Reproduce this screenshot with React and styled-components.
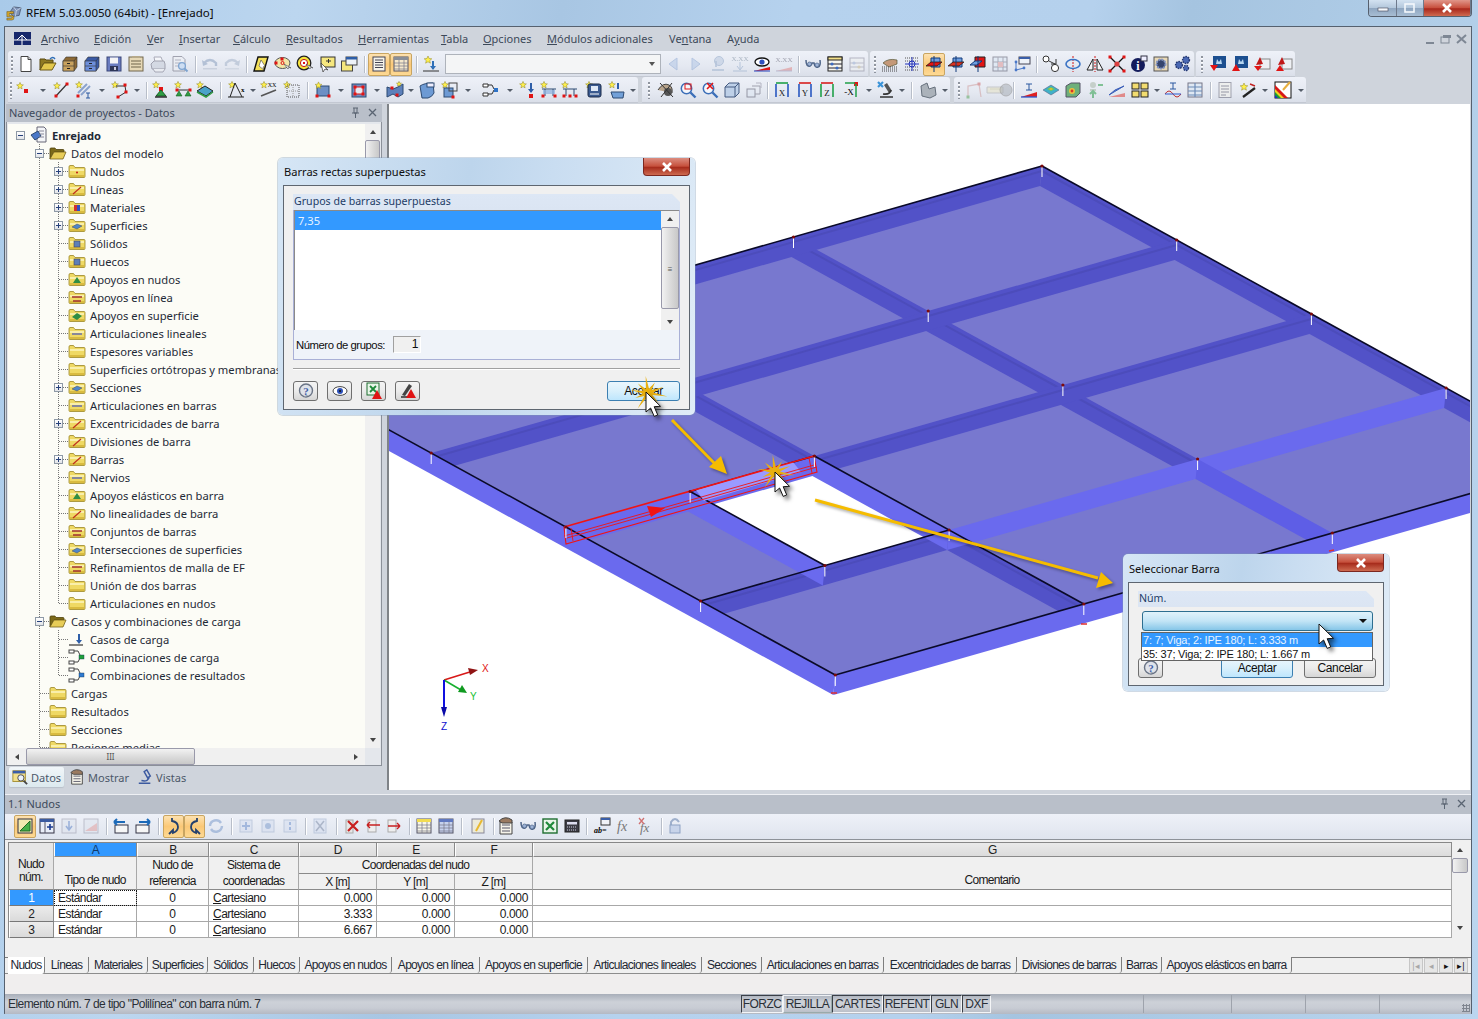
import React from "react";
import styled, { createGlobalStyle, css } from "styled-components";

const UI = '"Noto Sans", "Open Sans", sans-serif';
const TABLE = '"Liberation Sans", Arial, sans-serif';

const Global = createGlobalStyle`
  html, body { margin: 0; padding: 0; background: #b9d2ea; }
  * { box-sizing: border-box; }
`;

/* ---------- icon drawings, all on an 18x18 grid ---------- */
const Star = ({ x = 5, y = 5, r = 3.6 }) => {
  const pts = [];
  for (let k = 0; k < 10; k++) {
    const a = (Math.PI / 5) * k - Math.PI / 2;
    const q = k % 2 ? r * 0.45 : r;
    pts.push(`${(x + q * Math.cos(a)).toFixed(1)},${(y + q * Math.sin(a)).toFixed(1)}`);
  }
  return <polygon points={pts.join(" ")} fill="#fff04a" stroke="#8f8420" strokeWidth=".5" />;
};
const Dot = ({ x, y, c = "#e01414", s = 3 }) => <rect x={x - s / 2} y={y - s / 2} width={s} height={s} fill={c} />;
const Cabinet = ({ c, d }) => (
  <>
    <path d="M2 6l3-4h11v10l-3 4H2z" fill={d} stroke="#333" strokeWidth=".6" />
    <rect x="2" y="6" width="11" height="10" fill={c} stroke="#333" strokeWidth=".6" />
    <path d="M2 11h11M13 6l3-4" stroke="#333" strokeWidth=".6" />
    <rect x="6" y="8" width="3" height="1" fill="#222" />
    <rect x="6" y="13" width="3" height="1" fill="#222" />
  </>
);
const Magnifier = ({ c = "#3c6fb8" }) => (
  <>
    <circle cx="7.5" cy="7.5" r="5.2" fill="#f4f6fb" stroke={c} strokeWidth="1.5" />
    <path d="M11.5 11.5l5 5" stroke={c} strokeWidth="2.4" />
  </>
);
const Plane = ({ c = "#e01414" }) => (
  <>
    <path d="M6 3h9v9H6z" fill="#6f9ee0" stroke="#123a7a" />
    <path d="M1 11l5-4h11l-5 4z" fill={c} stroke="#111" strokeWidth=".7" />
    <path d="M9 1v16" stroke="#123a7a" strokeWidth="1" />
  </>
);
const AxisBox = ({ l, a, b }) => (
  <>
    <path d="M3 2h12" stroke={a} strokeWidth="1.6" />
    <path d="M3 3v13M15 3v13" stroke={b} strokeWidth="1.6" />
    <text x="9" y="15" fontSize="9" fontFamily="Liberation Serif" textAnchor="middle" fill="#222">{l}</text>
  </>
);
const Quad = ({ c = "#6d8fc4", r = true }) => (
  <>
    <rect x="3" y="5" width="12" height="10" fill={c} stroke="#2d4a72" />
    {r && <><Dot x={3} y={15} /><Dot x={15} y={15} /></>}
    <Star x={4.5} y={4.5} />
  </>
);
const Sheet = () => (
  <>
    <rect x="3" y="1.5" width="12" height="15" fill="#f2f1ea" stroke="#667" />
    <path d="M5 5h8M5 8h8M5 11h8M5 14h5" stroke="#556" />
  </>
);
const Grid3 = ({ c = "#dfe6f4", h = "#f2c33c" }) => (
  <>
    <rect x="2" y="2" width="14" height="14" fill={c} stroke="#556" />
    <rect x="2" y="2" width="14" height="3" fill={h} />
    <path d="M2 8h14M2 11h14M2 14h14M7 5v11M12 5v11" stroke="#778" strokeWidth=".7" />
  </>
);
const Small = ({ c }) => <rect x="6" y="7" width="6" height="6" fill={c} stroke="#445" strokeWidth=".6" />;

const ICONS = {
  page: <><path d="M4 1.5h7l3 3v12H4z" fill="#fff" stroke="#444" /><path d="M11 1.5v3h3" fill="#ccc" stroke="#444" /></>,
  folder: <><path d="M1 15V4h5l1 1h7v3H5z" fill="#8f7a22" stroke="#5a4a12" /><path d="M1 15l4-7h12l-4 7z" fill="#e3c84c" stroke="#6d5a18" /><path d="M11 4q3-3 5 0" stroke="#2e6fb8" fill="none" strokeWidth="1.4" /></>,
  cabY: <Cabinet c="#c9a25e" d="#8d6a36" />,
  cabB: <Cabinet c="#6d8fdc" d="#3a5aa6" />,
  save: <><rect x="2" y="2" width="14" height="14" fill="#6a7cc0" stroke="#3a4678" /><rect x="5" y="2.5" width="8" height="6" fill="#f4f4f6" /><rect x="5" y="11" width="8" height="5" fill="#2e3658" /><rect x="9" y="12" width="2" height="3" fill="#ccd" /></>,
  clip: <><rect x="2" y="2" width="14" height="14" fill="#e6d8b6" stroke="#70664c" /><path d="M4 6h10M4 9h10M4 12h10" stroke="#6f654a" /><rect x="5" y="1" width="8" height="2" fill="#b6a98a" /></>,
  print: <><path d="M5 2h7l2 5H6z" fill="#fff" stroke="#778" /><path d="M2 9l3-3h10l1 3v5H3z" fill="#c6ccd8" stroke="#667" /><path d="M4 14l2 3h8l2-3" fill="#f1f2f5" stroke="#778" /></>,
  prev: <><path d="M2 1.5h9l3 3V16H2z" fill="#eef0f4" stroke="#667" /><path d="M4 5h6M4 8h6M4 11h5" stroke="#889" /><circle cx="11" cy="11" r="3.4" fill="#bcd6f4" stroke="#2e6fb8" strokeWidth="1.3" /><path d="M13.5 13.5l3 3" stroke="#2e6fb8" strokeWidth="2" /></>,
  undo: <><path d="M3 8q6-6 12 0v3" fill="none" stroke="#8ba0bf" strokeWidth="2.4" /><path d="M1 5l1 6 5-2z" fill="#8ba0bf" /><rect x="2" y="13" width="14" height="1.5" fill="#b5bfcf" /></>,
  redo: <><path d="M15 8q-6-6-12 0v3" fill="none" stroke="#a5b4ca" strokeWidth="2.4" /><path d="M17 5l-1 6-5-2z" fill="#a5b4ca" /><rect x="2" y="13" width="14" height="1.5" fill="#c3ccd9" /></>,
  para: <><path d="M6 2h10l-4 14H2z" fill="#f3e05a" stroke="#111" strokeWidth="1.4" /><path d="M9 5l4 6-2 1 1 3-5-4z" fill="#fff" stroke="#444" strokeWidth=".6" /></>,
  cloud: <><ellipse cx="8.5" cy="8" rx="7.5" ry="5.5" fill="#f2e6a6" stroke="#555" /><Dot x={8} y={4} /><Dot x={2} y={8} /><circle cx="8.5" cy="8" r="1.5" fill="none" stroke="#e01414" /><path d="M10 9l4 5 1-2 2 1z" fill="#fff" stroke="#444" strokeWidth=".6" /></>,
  target: <><circle cx="8" cy="8" r="6.8" fill="#f8e43c" stroke="#222" strokeWidth="1.3" /><circle cx="8" cy="8" r="3.6" fill="#fff" stroke="#c01a1a" /><Dot x={8} y={8} s={2} /><path d="M10 9l4 5 1-2 2 1z" fill="#fff" stroke="#444" strokeWidth=".6" /></>,
  note: <><rect x="3" y="2" width="14" height="10" fill="#f6e77e" stroke="#333" /><path d="M8 6h5M10.5 4v4" stroke="#333" /><path d="M3 8l2 9 2-3 3 1z" fill="#fff" stroke="#333" strokeWidth=".7" /></>,
  win: <><rect x="1.5" y="6" width="11" height="10" fill="#f6e77e" stroke="#444" /><rect x="6" y="2" width="11" height="8" fill="#eef2f8" stroke="#444" /><rect x="6" y="2" width="11" height="2.5" fill="#2e5ea8" /></>,
  list: <><rect x="3" y="2" width="12" height="14" fill="#f5f3ea" stroke="#445" /><path d="M5 5h8M5 7.5h8M5 10h8M5 12.5h8" stroke="#445" /></>,
  table: <Grid3 c="#f5e8cc" h="#8a8f98" />,
  lcase: <><Star x={6} y={5} r={4} /><path d="M11 6v8" stroke="#2e6fb8" strokeWidth="2" /><path d="M8 11l3 4 3-4" fill="#2e6fb8" /><path d="M1 16h16" stroke="#333" /></>,
  left: <path d="M12 3v12L4 9z" fill="#b3c7e6" stroke="#8ca7d2" />,
  right: <path d="M5 3v12l8-6z" fill="#b3c7e6" stroke="#8ca7d2" />,
  eyeN: <><circle cx="10" cy="6" r="4.5" fill="#bac9e0" stroke="#8ea6c6" /><path d="M7 6v6M3 15h12" stroke="#8ea6c6" strokeWidth="1.6" /></>,
  xxD: <><text x="9" y="6" fontSize="7" textAnchor="middle" fontFamily="Liberation Serif" fill="#789">X.XX</text><path d="M9 7v7M6 11l3 4 3-4M2 16h14" stroke="#8ea6c6" fill="none" /></>,
  eye: <><ellipse cx="9" cy="7" rx="7" ry="4" fill="#fff" stroke="#111" strokeWidth="1.3" /><circle cx="9" cy="7" r="2.6" fill="#2e50c0" /><path d="M1 16l16-4v3z" fill="#e01414" /><path d="M1 16h16" stroke="#2245c0" /></>,
  xxL: <><text x="9" y="7" fontSize="7" textAnchor="middle" fontFamily="Liberation Serif" fill="#667">X.XX</text><path d="M1 16l16-4v4z" fill="#e08a8a" /><path d="M1 16h16" stroke="#99b" /></>,
  glasses: <><path d="M2 5q0 7 4 6 2-1 2-3h2q1 5 4 4 3-1 2-7" fill="none" stroke="#4e6488" strokeWidth="1.5" /><circle cx="5.5" cy="9" r="2" fill="#9db3d8" stroke="#4e6488" strokeWidth=".7" /><circle cx="13" cy="10" r="2" fill="#9db3d8" stroke="#4e6488" strokeWidth=".7" /></>,
  abacus: <><rect x="2" y="2" width="14" height="14" fill="#f5f5ee" stroke="#222" /><rect x="2" y="2" width="14" height="3" fill="#f3e08a" stroke="#222" /><path d="M2 9h14M2 13h14" stroke="#223" /><circle cx="6" cy="9" r="1.6" fill="#3a6ac0" /><circle cx="11" cy="13" r="1.6" fill="#3a6ac0" /></>,
  abacusG: <><rect x="2" y="3" width="14" height="13" fill="#eef0f0" stroke="#889" /><path d="M2 8h14M2 12h14" stroke="#99a" /><circle cx="6" cy="8" r="1.6" fill="#9aaed0" /><circle cx="11" cy="12" r="1.6" fill="#c8b98c" /></>,
  hand: <><path d="M2 8q5-5 14-3v4l-8 3z" fill="#c49878" stroke="#553" strokeWidth=".7" /><path d="M1 12h16M1 14h16M1 16h16" stroke="#444" strokeDasharray="1 1" /></>,
  dots: <><path d="M2 3h14M2 6h14M2 12h14M2 15h14" stroke="#555" strokeDasharray="1 1" /><circle cx="9" cy="9" r="3" fill="none" stroke="#2233bb" /><path d="M9 2v14M2 9h14" stroke="#2233bb" /></>,
  planeA: <Plane />,
  planeB: <Plane c="#d83020" />,
  planeC: <><path d="M6 2h10v10H6z" fill="#e01414" stroke="#222" /><path d="M1 10l5-4h7l-5 4z" fill="#6f9ee0" stroke="#123a7a" /><path d="M9 1v16" stroke="#123a7a" /></>,
  planeD: <><path d="M5 3h10v10H5z" fill="#abc2e6" stroke="#7b98c8" /><path d="M3 14l4-4h9l-4 4z" fill="#e6b9a8" /></>,
  gridC: <><rect x="2" y="2" width="14" height="14" fill="#dce8f5" stroke="#556" /><path d="M7 2v14M12 2v14M2 7h14M2 12h14" stroke="#778" /><rect x="7" y="7" width="5" height="5" fill="#e09a9a" /></>,
  winN: <><rect x="6" y="2" width="11" height="7" fill="#eef2f8" stroke="#445" /><rect x="6" y="2" width="11" height="2" fill="#3a5ea8" /><circle cx="3" cy="7" r="1.4" fill="#4a78c8" /><circle cx="3" cy="15" r="1.4" fill="#4a78c8" /><circle cx="11" cy="13" r="1.4" fill="#4a78c8" /><path d="M3 7v8l8-2" fill="none" stroke="#4a78c8" /></>,
  circles: <><circle cx="4" cy="4" r="3" fill="#fff" stroke="#333" /><circle cx="13" cy="13" r="3.6" fill="#fff" stroke="#333" /><path d="M7 6l6 3" stroke="#333" /><path d="M14 4v5h-5" fill="none" stroke="#333" /></>,
  rotate: <><path d="M9 1v16" stroke="#d01818" strokeDasharray="2 1" /><ellipse cx="9" cy="9" rx="7" ry="4.5" fill="none" stroke="#3b73c4" strokeWidth="1.6" /></>,
  mirror: <><path d="M1 15l6-11v11zM17 15l-6-11v11z" fill="#f4f5f8" stroke="#222" /><path d="M9 1v16" stroke="#d01818" strokeDasharray="2 1" /></>,
  xmark: <><path d="M2 2l14 14M16 2L2 16" stroke="#111" strokeWidth="1.3" /><circle cx="9" cy="9" r="2.6" fill="#d84040" /><Dot x={2} y={2} /><Dot x={16} y={2} /><Dot x={2} y={16} /><Dot x={16} y={16} /></>,
  info: <><circle cx="8" cy="10" r="7" fill="#141c5c" /><text x="8" y="14.5" textAnchor="middle" fontSize="12" fontWeight="700" fontFamily="Liberation Serif" fill="#fff">i</text><rect x="11" y="1" width="6" height="5" fill="#eef" stroke="#334" /></>,
  gearBox: <><rect x="2" y="2" width="14" height="14" fill="#e8d8b6" stroke="#555" /><circle cx="9" cy="9" r="4.5" fill="#36456e" stroke="#8496c4" strokeDasharray="2 1" strokeWidth="2" /></>,
  gears: <><circle cx="5" cy="10" r="3.4" fill="#4a68b4" stroke="#23366e" strokeDasharray="1.5 1" strokeWidth="1.5" /><circle cx="12" cy="5" r="3.4" fill="#4a68b4" stroke="#23366e" strokeDasharray="1.5 1" strokeWidth="1.5" /><circle cx="12" cy="13" r="2.6" fill="#4a68b4" stroke="#23366e" strokeDasharray="1.5 1" strokeWidth="1.2" /></>,
  imp1: <><rect x="4" y="1" width="13" height="12" fill="#1c4f90" /><path d="M8 4l2 3 2-3 1 5H7z" fill="#b6d6f0" /><path d="M1 10h8l-4 6z" fill="#e01414" /></>,
  imp2: <><rect x="4" y="1" width="13" height="12" fill="#1c4f90" /><path d="M8 4l2 3 2-3 1 5H7z" fill="#b6d6f0" /><path d="M5 9l4 7H1z" fill="#e01414" /></>,
  imp3: <><rect x="7" y="4" width="10" height="10" fill="#eef0f4" stroke="#888" /><path d="M7 2l-4 8 7-1z" fill="#c01818" /><path d="M1 11h8l-4 5z" fill="#e01414" /></>,
  imp4: <><rect x="7" y="4" width="10" height="10" fill="#eef0f4" stroke="#888" /><path d="M7 2l-4 8 7-1z" fill="#c01818" /><path d="M5 10l4 6H1z" fill="#e01414" /></>,
  sNode: <><Star x={5} y={5} /><Dot x={11} y={10} s={4} /></>,
  sLine: <><Star x={5} y={5} /><path d="M4 15L15 3" stroke="#333" strokeWidth="1.2" /><Dot x={4} y={15} /><Dot x={15} y={3} /></>,
  sBeam: <><Star x={4} y={4} /><path d="M3 12l9-9M6 14l9-9" stroke="#8aa2cc" strokeWidth="2" /><Dot x={3} y={15} /><path d="M11 12h4M13 12v5M11 17h4" stroke="#2a58a0" /></>,
  sPoly: <><Star x={4} y={4} /><path d="M5 5h9l1 6-8 5" fill="none" stroke="#333" /><Dot x={14} y={4} /><Dot x={15} y={11} /><Dot x={7} y={16} /></>,
  sSup: <><Star x={4} y={4} /><Dot x={9} y={8} s={4} /><path d="M9 9l5 6H4z" fill="#2f9e44" stroke="#165c24" /><path d="M3 16h12" stroke="#222" strokeWidth="1.4" /></>,
  sLsup: <><Star x={4} y={4} /><path d="M3 9h13" stroke="#333" /><Dot x={3} y={9} /><Dot x={16} y={9} /><path d="M5 10l3 5H2zM14 10l3 5h-6z" fill="#2f9e44" stroke="#165c24" strokeWidth=".6" /></>,
  sSsup: <><Star x={4} y={4} /><path d="M1 10l8-5 8 5-7 5z" fill="#4aa3c8" stroke="#222" /><path d="M1 11l9 5 7-5" fill="none" stroke="#2f9e44" strokeWidth="1.5" /></>,
  sHinge: <><Star x={5} y={4} /><path d="M8 2L3 16M8 2l7 14M1 16h16" stroke="#222" fill="none" /><text x="14" y="11" fontSize="7" fontFamily="Liberation Serif" fontWeight="700">x</text></>,
  sDim: <><Star x={4} y={4} /><text x="12" y="6" fontSize="6" fontFamily="Liberation Serif" textAnchor="middle">XX</text><path d="M1 15L16 9" stroke="#555" strokeWidth="1.6" /></>,
  sDots: <><Star x={4} y={4} /><rect x="4" y="4" width="12" height="12" fill="none" stroke="#555" strokeDasharray="1 1" /><path d="M10 4v12M4 10h12" stroke="#999" strokeDasharray="1 1" /></>,
  sRect: <Quad />,
  sFrame: <><rect x="2" y="3" width="14" height="13" fill="#6d8fc4" stroke="#2d4a72" /><rect x="5" y="6" width="8" height="7" fill="#e6e9f2" stroke="#e01414" /><Dot x={5} y={6} /><Dot x={13} y={6} /><Dot x={5} y={13} /><Dot x={13} y={13} /></>,
  sSurf: <><path d="M1 6l6 2 5-2 5-3v10l-5 3-5-3-6 3z" fill="#5d80ba" stroke="#2d4a72" /><Dot x={6} y={7} /><Dot x={11} y={14} /><Star x={13} y={3} r={2.6} /></>,
  sCube: <><path d="M2 5q4-3 13-3l1 10q-2 4-6 5H4z" fill="#6d9ad4" stroke="#2d4a72" /><rect x="9" y="2" width="7" height="4" fill="#eef" stroke="#2d4a72" /></>,
  sCubes: <><Star x={4} y={4} /><rect x="3" y="7" width="9" height="9" fill="#6d9ad4" stroke="#2d4a72" /><rect x="8" y="2" width="8" height="8" fill="none" stroke="#444" /><Dot x={12} y={16} /></>,
  sNodes: <><path d="M2 3h5v3H2zM2 12h5v3H2z" fill="#fff" stroke="#333" /><path d="M7 4h4l2 4M7 13h4l2-4" fill="none" stroke="#333" /><rect x="13" y="7" width="4" height="4" fill="#2e73c8" /></>,
  sLoad: <><Star x={4} y={4} /><path d="M12 2v9" stroke="#2e5ea8" strokeWidth="2" /><path d="M9 8l3 4 3-4" fill="#2e5ea8" /><Dot x={12} y={15} s={4} /></>,
  sMem: <><Star x={4} y={4} /><path d="M2 8h14M5 8v7M13 8v7" stroke="#2d4a72" /><rect x="3" y="9" width="12" height="4" fill="#8cb0e0" opacity=".7" /><Dot x={3} y={15} /><Dot x={15} y={15} /></>,
  sMem2: <><Star x={4} y={4} /><path d="M2 8h14M5 8v7M13 8v7" stroke="#2d4a72" /><Dot x={3} y={15} /><Dot x={9} y={15} /><Dot x={15} y={15} /></>,
  sOpen: <><Star x={4} y={4} /><rect x="3" y="3" width="13" height="13" rx="2" fill="#3a5a90" stroke="#1a2a4a" /><rect x="6" y="5" width="7" height="5" fill="#dfe8f6" /><path d="M5 13h9" stroke="#fff" /></>,
  sBag: <><Star x={4} y={4} /><path d="M10 2v6" stroke="#2e5ea8" strokeWidth="2" /><path d="M3 11h13l-1 6H5z" fill="#72a0d8" stroke="#2d4a72" /></>,
  skel: <><path d="M1 9q5-8 11-5 4 2 3 8" fill="#b8a48c" stroke="#444" /><circle cx="11" cy="11" r="4" fill="#555" /><path d="M3 2l13 14M15 2L4 16" stroke="#333" /></>,
  zoomR: <><Magnifier /><rect x="6" y="3" width="6" height="5" fill="none" stroke="#e01414" /></>,
  zoomX: <><Magnifier /><path d="M6 2l6 6M12 2L6 8" stroke="#e01414" strokeWidth="1.6" /></>,
  cube: <><path d="M2 6l4-4h10v10l-4 4H2z" fill="#bed0e8" stroke="#445a80" /><path d="M2 6h10v10M12 6l4-4" stroke="#445a80" fill="none" /></>,
  cubes: <><rect x="2" y="8" width="8" height="8" fill="#dfe7f3" stroke="#556" /><path d="M7 5h8v8h-5" fill="none" stroke="#667" /><path d="M11 2h5v5" fill="none" stroke="#889" /></>,
  axX: <AxisBox l="X" a="#21a04a" b="#2a58c0" />,
  axY: <AxisBox l="Y" a="#d82020" b="#2a58c0" />,
  axZ: <AxisBox l="Z" a="#d82020" b="#21a04a" />,
  axN: <><Dot x={14} y={3} s={4} /><path d="M3 2h10M14 3v13" stroke="#21a04a" strokeWidth="1.5" /><text x="7" y="14" fontSize="9" fontFamily="Liberation Serif" textAnchor="middle">-X</text></>,
  micro: <><path d="M10 2l5 8-3 2-5-8z" fill="#555" /><path d="M3 16h13M6 13q7 1 8-4" fill="none" stroke="#333" strokeWidth="1.6" /><path d="M1 1l5 5" stroke="#3b93d8" strokeWidth="2.2" /><path d="M6 1L1 6" stroke="#3b93d8" strokeWidth="2.2" /></>,
  shape: <path d="M2 5l6-3 2 6 6-2 1 8-6 3-8-2z" fill="#abb2ba" stroke="#66707c" />,
  frameC: <><path d="M3 16V5l11-2 2 13" fill="none" stroke="#cfa0a0" strokeWidth="1.3" /><path d="M3 16h1" stroke="#7cb07c" /><Dot x={3} y={16} c="#5fa85f" /><Dot x={14} y={3} c="#c66" /></>,
  tool: <><path d="M1 6h16v6H1z" fill="#e6e2c6" stroke="#aaa" /><path d="M4 8h10" stroke="#c8c49a" /></>,
  ball: <circle cx="8" cy="9" r="6" fill="#a8aeb6" stroke="#888" />,
  iRed: <><path d="M6 3h6M9 3v6M6 9h6" stroke="#2a58a0" /><path d="M1 16L17 11v5z" fill="#e02020" /><path d="M1 16h16" stroke="#2a58d0" strokeWidth="1.3" /></>,
  rain: <><path d="M1 9l8-5 8 5-8 5z" fill="#3fb0c8" stroke="#557" strokeWidth=".5" /><path d="M5 8l4-2 4 2-4 2z" fill="#78c850" /><path d="M7 8l2-1 2 1-2 1z" fill="#e8c030" /></>,
  rcube: <><path d="M2 5l5-3h9v10l-4 4H2z" fill="#6eb07a" stroke="#556" /><circle cx="8" cy="10" r="3" fill="#e9c23c" /><circle cx="8" cy="10" r="1.4" fill="#d8342c" /></>,
  greenA: <><circle cx="7" cy="4" r="3" fill="#a9b8a8" /><path d="M4 8h6v2H4z" fill="#a9b8a8" /><path d="M7 17v-6M4 13l3-3 3 3" stroke="#2d9e4a" strokeWidth="2" fill="none" /><path d="M17 4h-5" stroke="#2d9e4a" strokeWidth="2" /></>,
  pRed: <><path d="M1 14l15-9-9 4z" fill="#6f8ed6" stroke="#3a5db8" /><path d="M1 16h16V12z" fill="#e08a8a" /></>,
  quads: <><rect x="1" y="2" width="7" height="6" fill="#f2dc70" stroke="#222" /><rect x="10" y="2" width="7" height="6" fill="#f2dc70" stroke="#222" /><rect x="1" y="10" width="7" height="6" fill="#f2dc70" stroke="#222" /><rect x="10" y="10" width="7" height="6" fill="#f2dc70" stroke="#222" /></>,
  iWave: <><path d="M6 2h6M9 2v6M6 8h6" stroke="#2a58a0" /><path d="M1 13q4-6 8 0t8 0" fill="none" stroke="#c03030" /><path d="M1 13h16" stroke="#2a58d0" /></>,
  tableB: <><rect x="2" y="2" width="14" height="14" fill="#dfe8f3" stroke="#778" /><path d="M2 6h14M2 10h14M2 14h14M9 2v14" stroke="#6a89b6" strokeWidth="1.2" /></>,
  doc: <Sheet />,
  wand: <><Star x={5} y={6} r={4} /><path d="M4 16l12-9" stroke="#222" strokeWidth="2.2" /><path d="M11 3l5 2" stroke="#c02020" strokeWidth="1.4" /></>,
  rainbow: <><rect x="1" y="1" width="16" height="16" fill="#fff" stroke="#111" /><path d="M1 4l13 13H1z" fill="#d81818" /><path d="M1 8l9 9H1z" fill="#f0d020" /><path d="M1 11l6 6H1z" fill="#18a030" /><path d="M1 14l3 3H1z" fill="#1830c8" /><path d="M9 9l7-8" stroke="#e8b040" strokeWidth="2" /></>,
  tri: <><rect x="2" y="2" width="14" height="14" fill="#f1e9b0" stroke="#334" /><path d="M4 14L14 4v10z" fill="#45b04a" stroke="#1f6a24" /></>,
  tplus: <><rect x="2" y="2" width="14" height="14" fill="#e9eef8" stroke="#334" /><rect x="2" y="2" width="14" height="3" fill="#3a5aa0" /><path d="M7 5v11" stroke="#556" /><path d="M12 7v6M9 10h6" stroke="#1a3a90" strokeWidth="1.6" /></>,
  tdown: <><rect x="2" y="2" width="14" height="14" fill="#dfe4ee" stroke="#99a" /><path d="M9 4v8M6 9l3 4 3-4" stroke="#5f84c6" fill="none" strokeWidth="1.6" /></>,
  tred: <><rect x="2" y="2" width="14" height="14" fill="#dfe4ee" stroke="#99a" /><path d="M3 14L15 6v8z" fill="#e0a0a0" /></>,
  impL: <><rect x="3" y="8" width="13" height="8" fill="#f6f6f6" stroke="#334" /><path d="M2 5h11M2 5l3-3M2 5l3 3" stroke="#1c6ab8" strokeWidth="2" fill="none" /></>,
  impR: <><rect x="2" y="8" width="13" height="8" fill="#f6f6f6" stroke="#334" /><path d="M16 5H5M16 5l-3-3M16 5l-3 3" stroke="#1c6ab8" strokeWidth="2" fill="none" /></>,
  hookL: <path d="M7 1v3q6 1 6 6 0 4-5 6v-3l-4 4" fill="none" stroke="#24406e" strokeWidth="1.8" />,
  hookR: <path d="M11 1v3q-6 1-6 6 0 4 5 6v-3l4 4" fill="none" stroke="#24406e" strokeWidth="1.8" />,
  sync: <path d="M3 9a6 6 0 0 1 11-3M15 9a6 6 0 0 1-11 3" fill="none" stroke="#7d9ccc" strokeWidth="2.4" />,
  b1: <><rect x="3" y="3" width="12" height="12" fill="#d5def0" stroke="#9fb0cc" /><path d="M9 5v8M5 9h8" stroke="#6d90cc" strokeWidth="2" /></>,
  b2: <><rect x="3" y="3" width="12" height="12" fill="#d5def0" stroke="#9fb0cc" /><circle cx="9" cy="9" r="3" fill="#7d9ccc" /></>,
  b3: <><rect x="3" y="3" width="12" height="12" fill="#d5def0" stroke="#9fb0cc" /><path d="M9 5v3M9 10v3" stroke="#6d90cc" strokeWidth="2" /></>,
  xBox: <><rect x="3" y="2" width="12" height="14" fill="#d5def0" stroke="#9fb0cc" /><path d="M5 4l8 10M13 4L5 14" stroke="#7d8ca8" strokeWidth="1.6" /></>,
  xr: <><rect x="3" y="3" width="7" height="13" fill="#e6e6e6" stroke="#aaa" /><path d="M5 4l10 10M15 4L5 14" stroke="#c82020" strokeWidth="2.2" /></>,
  xl: <><rect x="4" y="3" width="8" height="12" fill="#eee" stroke="#aaa" /><path d="M16 8H3M3 8l3-3M3 8l3 3" stroke="#c82020" strokeWidth="1.4" fill="none" /></>,
  xr2: <><rect x="3" y="3" width="8" height="12" fill="#eee" stroke="#aaa" /><path d="M3 9h12M15 9l-3-3M15 9l-3 3" stroke="#c82020" strokeWidth="1.4" fill="none" /></>,
  colY: <Grid3 c="#f8f6e8" h="#f2dc50" />,
  colB: <Grid3 c="#c6d2ee" h="#6078c0" />,
  edit: <><rect x="3" y="2" width="12" height="14" fill="#ecead8" stroke="#889" /><path d="M7 14L13 3" stroke="#e8b830" strokeWidth="2" /></>,
  doc2: <><path d="M3 5h12v12H3z" fill="#f6f4ea" stroke="#444" /><path d="M5 8h8M5 11h8M5 14h8" stroke="#556" /><path d="M2 4q6-6 13-1v3H5z" fill="#9a7a60" stroke="#444" /></>,
  excel: <><rect x="2" y="2" width="14" height="14" fill="#e8f5e8" stroke="#1e6e30" strokeWidth="1.4" /><path d="M5 5l8 8M13 5l-8 8" stroke="#1e8a3a" strokeWidth="2.2" /></>,
  calc: <><rect x="2" y="3" width="14" height="12" fill="#3c3c44" stroke="#222" /><rect x="4" y="5" width="10" height="2.5" fill="#dde" /><path d="M4 10h10M4 13h10" stroke="#ccd" strokeDasharray="1 1" /></>,
  abf: <><rect x="8" y="1" width="9" height="7" fill="#f0f2f6" stroke="#333" /><rect x="8" y="1" width="9" height="2" fill="#3a5ea8" /><text x="1" y="16" fontSize="8" fontStyle="italic" fontWeight="700" fontFamily="Liberation Serif">ab=</text></>,
  fx: <text x="2" y="14" fontSize="14" fontStyle="italic" fontFamily="Liberation Serif" fill="#777">fx</text>,
  fxx: <><text x="3" y="15" fontSize="13" fontStyle="italic" fontFamily="Liberation Serif" fill="#777">fx</text><path d="M2 1l5 6M7 1L2 7" stroke="#d07070" strokeWidth="1.3" /></>,
  lock: <><path d="M5 8V5q4-6 8 0" fill="none" stroke="#9fb0cc" strokeWidth="2" /><rect x="4" y="8" width="10" height="8" fill="#c8d4ea" stroke="#8ea2c4" /></>,
  help: <><circle cx="9" cy="8.5" r="6.5" fill="#dfe3ea" stroke="#6a7486" strokeWidth="1.4" /><path d="M6 16l3-3h3z" fill="#a0a8b6" /><text x="9" y="12.5" textAnchor="middle" fontSize="11" fontWeight="700" fontFamily="Liberation Serif" fill="#3f5fa8">?</text></>,
  eyeBtn: <><ellipse cx="9" cy="9" rx="7" ry="4.4" fill="#fff" stroke="#444" /><circle cx="9" cy="9" r="3" fill="#2c50b8" /><circle cx="9" cy="9" r="1" fill="#111" /></>,
  xlsWarn: <><rect x="2" y="1" width="12" height="12" fill="#e8f5e8" stroke="#1e6e30" /><path d="M5 4l6 6M11 4l-6 6" stroke="#1e8a3a" strokeWidth="1.8" /><path d="M12 8l5 9H7z" fill="#e01414" /></>,
  penWarn: <><path d="M3 13L10 2l3 2-7 10z" fill="#444" /><path d="M2 15h9" stroke="#222" strokeWidth="1.4" /><path d="M12 7l5 9H7z" fill="#e01414" /></>
};

const SvgIcon = styled.svg`
  display: block;
  flex: none;
  width: ${({ $s }) => $s || 18}px;
  height: ${({ $s }) => $s || 18}px;
  opacity: ${({ $dim }) => ($dim ? 0.55 : 1)};
`;
const Icon = ({ n, dim, s }) => (
  <SvgIcon viewBox="0 0 18 18" $dim={dim} $s={s}>{ICONS[n]}</SvgIcon>
);

/* ---------- window shell ---------- */
const Desk = styled.div`
  position: relative;
  width: 1478px;
  height: 1019px;
  overflow: hidden;
  font-family: ${UI};
  font-size: 11px;
  color: #1d2733;
  background: linear-gradient(100deg, #a9cae9 0%, #bcd6ef 18%, #a8c6e3 34%, #b6d2ee 48%, #b5d1ed 66%, #a5c4e0 72%, #bbd6ef 100%);
`;
const TitleBar = styled.div`
  height: 26px;
  display: flex;
  align-items: center;
  padding-left: 5px;
  gap: 4px;
  font-size: 11.5px;
  color: #0a0a0a;
`;
const TitleText = styled.span`
  position: relative;
  top: -1px;
`;
const WinButtons = styled.div`
  margin-left: auto;
  margin-right: 6px;
  align-self: flex-start;
  display: flex;
  height: 17px;
  border: 1px solid #56606e;
  border-top: 0;
  border-radius: 0 0 4px 4px;
  overflow: hidden;
`;
const WinBtn = styled.div`
  width: ${({ $w }) => $w}px;
  display: flex;
  align-items: center;
  justify-content: center;
  border-right: 1px solid #6e7a8c;
  background: ${({ $close }) =>
    $close
      ? "linear-gradient(#e0968a, #c8503e 48%, #a9281c 55%, #cf6a50)"
      : "linear-gradient(#d3e2f1, #b4c8dc 48%, #8fa6c0 52%, #a7bdd3)"};
`;
const Frame = styled.div`
  margin-left: 4px;
  width: 1468px;
  height: 988px;
  background: #cfd4dc;
  border: 1px solid #56616f;
  border-bottom-color: #6b7684;
  display: flex;
  flex-direction: column;
`;
const MenuBar = styled.div`
  height: 23px;
  display: flex;
  align-items: center;
  padding-left: 9px;
  margin-bottom: 1px;
  flex: none;
  color: #3c4858;
`;
const Logo = styled.svg`
  width: 17px;
  height: 13px;
  margin-right: 10px;
  flex: none;
`;
const MenuItem = styled.div`
  width: ${({ $w }) => $w}px;
  flex: none;
  u { text-decoration: underline; }
`;
const MdiButtons = styled.div`
  margin-left: auto;
  margin-right: 4px;
  display: flex;
  gap: 5px;
  align-items: flex-end;
  color: #7e8794;
`;
const ToolRow = styled.div`
  height: 26px;
  flex: none;
  display: flex;
  padding-left: 3px;
  align-items: stretch;
`;
const ToolGroup = styled.div`
  display: flex;
  align-items: center;
  margin-right: ${({ $gap }) => $gap ?? 2}px;
  border-radius: 3px 3px 0 0;
  background: linear-gradient(#eef1f8, #e4e8f1 60%, #d9dee8);
  box-shadow: inset 0 -1px 0 #c3c8d2;
`;
const Slot = styled.div`
  flex: none;
  width: ${({ $w }) => $w}px;
  height: 24px;
  display: flex;
  align-items: center;
  justify-content: center;
`;
const ActiveBtn = styled(Slot)`
  height: 23px;
  border: 1px solid #c9a561;
  border-radius: 2px;
  background: linear-gradient(#fde2b0, #fbc877 50%, #fdd994);
`;
const Grip = styled(Slot)`
  &::before {
    content: "";
    width: 2px;
    height: 17px;
    background: repeating-linear-gradient(#8f959f 0 2px, #fff 2px 3px, transparent 3px 4px);
  }
`;
const Sep = styled(Slot)`
  &::before {
    content: "";
    width: 1px;
    height: 17px;
    background: #b8bec9;
    box-shadow: 1px 0 0 #fff;
  }
`;
const DropTick = styled(Slot)`
  &::before {
    content: "";
    border: 3px solid transparent;
    border-top: 3px solid #555d69;
    border-bottom: 0;
  }
`;
const ComboBox = styled(Slot)`
  height: 20px;
  background: #f4f5f6;
  border: 1px solid #aeb3bb;
  justify-content: flex-end;
  padding-right: 5px;
  &::after {
    content: "";
    border: 3px solid transparent;
    border-top: 4px solid #555;
    border-bottom: 0;
  }
`;

const Tool = ({ t }) => {
  const [raw, w] = t.split(":");
  const width = w ? Number(w) : 22;
  if (raw === "grip") return <Grip $w={width} />;
  if (raw === "sep") return <Sep $w={width} />;
  if (raw === "dd") return <DropTick $w={width} />;
  if (raw === "gap") return <Slot $w={width} />;
  if (raw === "combo") return <ComboBox $w={width} />;
  if (raw[0] === "*") return <ActiveBtn $w={width}><Icon n={raw.slice(1)} /></ActiveBtn>;
  if (raw[0] === "~") return <Slot $w={width}><Icon n={raw.slice(1)} dim /></Slot>;
  return <Slot $w={width}><Icon n={raw} /></Slot>;
};
const tools = (s) => s.split(" ").map((t, i) => <Tool key={i} t={t} />);

const ROW1 = [
  "grip:7 page folder cabY cabB save clip ~print ~prev sep:8 ~undo ~redo sep:7 para cloud target note win sep:8 *list *table sep:8 lcase gap:3 combo:216 gap:2 ~left ~right ~eyeN ~xxD eye ~xxL sep:7 glasses abacus ~abacusG",
  "grip:9 hand dots *planeA planeB planeC ~gridC winN sep:7 circles rotate mirror xmark info gearBox gears",
  "grip:11 imp1 imp2 imp3 imp4"
];
const ROW2 = [
  "grip:5 sNode dd:15 sLine sBeam:24 dd:12 sPoly:24 dd:10 sep:8 sSup sLsup sSsup sep:8 sHinge:24 dd:10 sDim sDots:24 sep:6 sRect:26 dd:10 sFrame:26 dd:10 sSurf:26 dd:6 sCube:26 sCubes:20 dd:16 sNodes:28 dd:12 sLoad:24 sMem:18 sMem2:24 sOpen:24 sBag dd:10",
  "grip:13 skel zoomR zoomX cube ~cubes sep:5 axX:24 axY axZ axN:26 dd:10 micro:24 dd:8 sep:10 shape:24 dd:10",
  "grip:10 ~frameC:20 ~tool ~ball:2 sep:10 iRed rain rcube ~greenA pRed quads:24 dd:10 iWave tableB sep:8 ~doc wand:24 dd:10 rainbow:26 dd:10"
];

/* ---------- project navigator ---------- */
const Main = styled.div`
  height: 686px;
  flex: none;
  margin-top: 1px;
  display: flex;
`;
const NavPanel = styled.div`
  width: 376px;
  flex: none;
  margin-left: 1px;
  display: flex;
  flex-direction: column;
`;
const PaneHead = styled.div`
  height: 18px;
  flex: none;
  display: flex;
  align-items: center;
  justify-content: space-between;
  padding: 0 5px 2px 3px;
  background: #b9bfc9;
  color: #3d4a5b;
`;
const PaneBtns = styled.div`
  display: flex;
  gap: 8px;
  align-items: center;
  svg { display: block; }
`;
const NavBody = styled.div`
  height: 644px;
  flex: none;
  border: 1px solid #8b9099;
  border-top: 0;
  background: #e4e7ec;
  display: flex;
  flex-direction: column;
  padding: 2px 1px 0 1px;
`;
const TreeRow0 = styled.div`
  flex: 1;
  display: flex;
  min-height: 0;
`;
const Tree = styled.div`
  flex: 1;
  overflow: hidden;
  padding: 2px 0 0 3px;
  font-size: 11.2px;
  background: #fcfcf6;
`;
const Row = styled.div`
  height: 18px;
  display: flex;
  align-items: center;
  white-space: nowrap;
  color: #1f2a36;
  font-weight: ${({ $bold }) => ($bold ? 700 : 400)};
`;
const dotted = "repeating-linear-gradient(#777 0 1px, transparent 1px 2px)";
const dottedH = "repeating-linear-gradient(90deg, #777 0 1px, transparent 1px 2px)";
const Col = styled.div`
  position: relative;
  width: 19px;
  height: 18px;
  flex: none;
  background-repeat: no-repeat;
  ${({ $line }) => $line === "full" && css`
    background-image: ${dotted};
    background-size: 1px 18px;
    background-position: 9px 0;
  `}
  ${({ $line }) => $line === "half" && css`
    background-image: ${dotted};
    background-size: 1px 9px;
    background-position: 9px 0;
  `}
  &::after {
    content: ${({ $tee }) => ($tee ? '""' : "none")};
    position: absolute;
    left: 10px;
    top: 9px;
    width: 9px;
    height: 1px;
    background: ${dottedH};
  }
`;
const Expander = styled.span`
  position: absolute;
  left: 5px;
  top: 5px;
  width: 9px;
  height: 9px;
  z-index: 1;
  border: 1px solid #8e99a6;
  background: linear-gradient(#fff, #e2e4e8);
  &::before {
    content: "";
    position: absolute;
    left: 1px;
    top: 3px;
    width: 5px;
    height: 1px;
    background: #26407a;
  }
  &::after {
    content: ${({ $plus }) => ($plus ? '""' : "none")};
    position: absolute;
    left: 3px;
    top: 1px;
    width: 1px;
    height: 5px;
    background: #26407a;
  }
`;
const TreeLabel = styled.span`
  margin-left: 4px;
`;

const FolderClosed = ({ g }) => (
  <>
    <path d="M1 5q0-1.5 1-1.5h3.5l1.5 2h9q1 0 1 1v8q0 1-1 1H2q-1 0-1-1z" fill="#efd964" stroke="#9a8526" strokeWidth=".8" />
    <path d="M2 7h14v2H2z" fill="#f9efaa" />
    <path d="M2 13h14v2H2z" fill="#d9bb40" />
    {g}
  </>
);
const FolderOpen = () => (
  <>
    <path d="M1 15V5q0-1 1-1h4l1 1.5h7q1 0 1 1V8H5z" fill="#7c6a18" stroke="#4f410c" strokeWidth=".8" />
    <path d="M1 15l4-7h12l-3 7z" fill="#e8cd58" stroke="#73611a" strokeWidth=".8" />
  </>
);
const TREE_ICONS = {
  open: <FolderOpen />,
  plain: <FolderClosed />,
  node: <FolderClosed g={<circle cx="9" cy="10.5" r="1" fill="#c01818" />} />,
  line: <FolderClosed g={<path d="M5 14l8-7" stroke="#c03020" strokeWidth="1.2" />} />,
  mat: <FolderClosed g={<><rect x="6" y="7" width="3" height="6" fill="#d03030" /><rect x="9" y="7" width="3" height="6" fill="#3050c0" /></>} />,
  surf: <FolderClosed g={<path d="M4 11l5-3 5 2-5 3z" fill="#4f86c8" stroke="#334" strokeWidth=".4" />} />,
  solid: <FolderClosed g={<Small c="#5d7fb8" />} />,
  sup: <FolderClosed g={<path d="M9 7l4 6H5z" fill="#2f8e44" />} />,
  lsup: <FolderClosed g={<path d="M4 9h10M5 13h8" stroke="#a03030" strokeWidth="1.4" />} />,
  ssup: <FolderClosed g={<path d="M4 11l5-4 5 3-5 4z" fill="#2f8e44" />} />,
  hinge: <FolderClosed g={<path d="M4 10h10" stroke="#889" strokeWidth="2" />} />,
  cases: <><path d="M1 15h14" stroke="#333" strokeWidth="1.2" /><path d="M11 4v8" stroke="#2e5ea8" strokeWidth="2" /><path d="M8 10l3 4 3-4" fill="#2e5ea8" /></>,
  comboG: <><rect x="1" y="2" width="5" height="3" fill="#fff" stroke="#444" /><rect x="1" y="13" width="5" height="3" fill="#fff" stroke="#444" /><path d="M6 3h4l2 4M6 14h4l2-4" fill="none" stroke="#444" /><rect x="11" y="7" width="5" height="4" fill="#1fa03a" stroke="#135" strokeWidth=".4" /></>,
  comboB: <><rect x="1" y="2" width="5" height="3" fill="#fff" stroke="#444" /><rect x="1" y="13" width="5" height="3" fill="#fff" stroke="#444" /><path d="M6 3h4l2 4M6 14h4l2-4" fill="none" stroke="#444" /><rect x="11" y="7" width="5" height="4" fill="#2e7ad0" stroke="#135" strokeWidth=".4" /></>,
  root: <><path d="M7 1h7l2 2v13H7z" fill="#f4f5f8" stroke="#667" /><path d="M1 9l7-4 3 5-6 4z" fill="#4a78c8" stroke="#2d4a72" /><path d="M9 5h5M9 8h5M9 11h5" stroke="#889" /></>
};

const TREE = [
  [0, "Enrejado", "-", "root"], [1, "Datos del modelo", "-", "open"],
  [2, "Nudos", "+", "node"], [2, "Líneas", "+", "line"], [2, "Materiales", "+", "mat"], [2, "Superficies", "+", "surf"],
  [2, "Sólidos", "", "solid"], [2, "Huecos", "", "solid"], [2, "Apoyos en nudos", "", "sup"], [2, "Apoyos en línea", "", "lsup"],
  [2, "Apoyos en superficie", "", "ssup"], [2, "Articulaciones lineales", "", "hinge"], [2, "Espesores variables", "", "plain"],
  [2, "Superficies ortótropas y membranas", "", "plain"], [2, "Secciones", "+", "surf"], [2, "Articulaciones en barras", "", "hinge"],
  [2, "Excentricidades de barra", "+", "line"], [2, "Divisiones de barra", "", "line"], [2, "Barras", "+", "line"],
  [2, "Nervios", "", "hinge"], [2, "Apoyos elásticos en barra", "", "sup"], [2, "No linealidades de barra", "", "line"],
  [2, "Conjuntos de barras", "", "lsup"], [2, "Intersecciones de superficies", "", "surf"], [2, "Refinamientos de malla de EF", "", "lsup"],
  [2, "Unión de dos barras", "", "plain"], [2, "Articulaciones en nudos", "", "plain", true], [1, "Casos y combinaciones de carga", "-", "open"],
  [2, "Casos de carga", "", "cases"], [2, "Combinaciones de carga", "", "comboG"], [2, "Combinaciones de resultados", "", "comboB", true],
  [1, "Cargas", "", "plain"], [1, "Resultados", "", "plain"], [1, "Secciones", "", "plain"], [1, "Regiones medias", "", "plain"]
];

const TreeLine = ({ level, label, exp, icon, last }) => (
  <Row $bold={level === 0}>
    <Col>{level === 0 && <Expander />}</Col>
    {level >= 1 ? (
      <Col $line="full" $tee={level === 1}>
        {level === 1 && exp && <Expander $plus={exp === "+"} />}
      </Col>
    ) : null}
    {level === 2 ? (
      <Col $line={last ? "half" : "full"} $tee>
        {exp && <Expander $plus={exp === "+"} />}
      </Col>
    ) : null}
    <SvgIcon viewBox="0 0 18 18">{TREE_ICONS[icon]}</SvgIcon>
    <TreeLabel>{label}</TreeLabel>
  </Row>
);

const VBar = styled.div`
  width: ${({ $w }) => $w || 15}px;
  flex: none;
  display: flex;
  flex-direction: column;
  align-items: stretch;
  background: #f0f0f0;
`;
const HBar = styled.div`
  height: 17px;
  flex: none;
  display: flex;
  align-items: stretch;
  margin-right: 15px;
  background: #f0f0f0;
`;
const BarSpace = styled.div`
  flex: ${({ $h }) => ($h ? "none" : 1)};
  ${({ $h }) => $h && `height: ${$h}px;`}
`;
const Arrow = styled.span`
  flex: none;
  width: ${({ $v }) => ($v ? "auto" : "18px")};
  height: ${({ $v }) => ($v ? "16px" : "auto")};
  display: flex;
  align-items: center;
  justify-content: center;
  &::before {
    content: "";
    border: 3px solid transparent;
    ${({ $d }) => `border-${{ up: "bottom", down: "top", left: "right", right: "left" }[$d]}: 4px solid #444;`}
    ${({ $d }) => `border-${$d === "left" ? "left" : $d === "right" ? "right" : $d === "up" ? "top" : "bottom"}: 0;`}
  }
`;
const Thumb = styled.div`
  border: 1px solid #99a;
  border-radius: 2px;
  background: linear-gradient(${({ $v }) => ($v ? "90deg" : "180deg")}, #f2f2f2, #dcdcdc 50%, #c8c8c8);
  display: flex;
  align-items: center;
  justify-content: center;
  color: #555;
  font-size: 8px;
  ${({ $size, $v }) => ($v ? `height: ${$size}px;` : `width: ${$size}px;`)}
`;
const NavTabs = styled.div`
  flex: 1;
  display: flex;
  align-items: center;
  gap: 2px;
  padding: 0 0 2px 3px;
`;
const NavTab = styled.div`
  height: 20px;
  display: flex;
  align-items: center;
  gap: 3px;
  padding: 0 3px 0 3px;
  color: #4c586a;
  ${({ $on }) => $on && "background: linear-gradient(#f1f6f9, #dce9ee); border-radius: 2px; box-shadow: 0 1px 1px #b9c0ca;"}
`;

/* ---------- 3D viewport ---------- */
const Viewport = styled.div`
  flex: 1;
  margin: 0 1px 0 5px;
  background: #fff;
  border-left: 2px solid #7f8388;
  position: relative;
  overflow: hidden;
`;
const SceneSvg = styled.svg`
  display: block;
  width: 1081px;
  height: 686px;
`;

const at = (i, j) => [1041 - 248.5 * i + 134.7 * j, 166 + 71 * i + 74 * j];
const pt = (p) => p.join(",");
const COLORS = { dark: "#5252c8", light: "#6a6aee", mid: "#5e5ee6" };
const BEAMS = [
  [[0, 0], [0, 4], "dark"], [[1, 0], [1, 3], "dark"], [[2, 0], [2, 2], "dark"],
  [[0, 0], [3, 0], "dark"], [[0, 1], [3, 1], "dark"], [[0, 2], [2, 2], "dark"],
  [[2, 3], [3, 3], "dark"], [[2, 3], [2, 4], "dark"],
  [[0, 3], [2, 3], "light"], [[1, 3], [1, 4], "mid"], [[2, 2], [2, 3], "light"], [[2.5, 2], [2.5, 3], "light"],
  [[2, 2], [3, 2], "light"], [[3, 0], [3, 4], "light"], [[0, 4], [3, 4], "light"]
];
const EDGES = [
  [[0, 0], [3, 0]], [[0, 0], [0, 4]], [[3, 0], [3, 4]], [[0, 4], [3, 4]],
  [[2, 3], [3, 3]], [[2, 2], [2, 4]], [[2.5, 2], [2.5, 3]], [[2, 2], [2.5, 2]]
];
const NODES = [
  [0, 0], [1, 0], [0, 1], [1, 1], [0, 2], [1, 2], [0, 3], [1, 3], [2, 3], [3, 3], [1, 4], [2, 4], [3, 4],
  [3, 1], [3, 2], [2.5, 2], [2.5, 3], [2, 2]
];

const Scene = () => {
  const plate = [at(0, 0), at(3, 0), at(3, 4), at(0, 4)].map(pt).join(" L");
  const hole = [at(2, 2), at(2, 3), at(2.5, 3), at(2.5, 2)].map(pt).join(" L");
  return (
    <SceneSvg viewBox="388 104 1081 686">
      <path d={`M${plate}Z M${hole}Z`} fill="#7878cf" fillRule="evenodd" />
      {BEAMS.map(([a, b, tone], k) => {
        const p = at(...a);
        const q = at(...b);
        const points = [p, q, [q[0] - 2, q[1] + 20], [p[0] - 2, p[1] + 20]].map(pt).join(" ");
        return (
          <g key={k}>
            <polygon points={points} fill={COLORS[tone]} />
            {tone === "dark" && <line x1={p[0]} y1={p[1] + 5} x2={q[0]} y2={q[1] + 5} stroke="#4a4ab6" strokeWidth="2" opacity=".7" />}
          </g>
        );
      })}
      {EDGES.map(([a, b], k) => {
        const p = at(...a);
        const q = at(...b);
        return <line key={k} x1={p[0]} y1={p[1]} x2={q[0]} y2={q[1]} stroke="#0a0a28" strokeWidth="1.6" />;
      })}
      <polygon points="695,490 792,462 800,472 703,501" fill="#9a9aff" />
      <g fill="none" stroke="#f01414">
        <path d="M563 527L813 456" strokeWidth="1.6" />
        <path d="M813 456L816 472L565 544L563 527" strokeWidth="1.1" />
        <path d="M563 536L813 465M566 538L816 467M570 528L572 541M808 458L811 473" strokeWidth=".9" />
      </g>
      <polygon points="646,506 664,508 650,517" fill="#f01414" />
      {NODES.map(([i, j], k) => {
        const p = at(i, j);
        return (
          <g key={k}>
            <line x1={p[0]} y1={p[1] + 1} x2={p[0]} y2={p[1] + 11} stroke="#fff" strokeWidth="1" />
            <circle cx={p[0]} cy={p[1]} r="1.6" fill="#7d0a0a" />
          </g>
        );
      })}
      <path d="M1080 624l6 0M830 693l6 0M1328 551l5-1" stroke="#e03030" strokeWidth="1.4" />
      <g fill="none" strokeWidth="1.6">
        <line x1="443" y1="680" x2="472" y2="671" stroke="#d81818" />
        <line x1="443" y1="680" x2="460" y2="690" stroke="#18b030" />
        <line x1="443" y1="680" x2="443" y2="708" stroke="#1010e0" strokeWidth="2" />
      </g>
      <polygon points="477,670 467,668 469,675" fill="#901414" />
      <polygon points="466,693 457,692 461,685" fill="#109a20" />
      <polygon points="443,717 440,707 446,707" fill="#0a0aa8" />
      <g fontSize="10" fontFamily={TABLE}>
        <text x="481" y="672" fill="#e01414">X</text>
        <text x="469" y="700" fill="#18c030">Y</text>
        <text x="440" y="730" fill="#1010d0">Z</text>
      </g>
    </SceneSvg>
  );
};

/* ---------- bottom table panel ---------- */
const LowerPanel = styled.div`
  margin-top: 4px;
  flex: 1;
  display: flex;
  flex-direction: column;
  border-top: 1px solid #eef0f4;
`;
const LowerHead = styled(PaneHead)`
  height: 19px;
  padding-left: 3px;
`;
const LowerTools = styled.div`
  height: 26px;
  flex: none;
  display: flex;
  align-items: center;
  padding: 0 0 1px 9px;
  background: linear-gradient(#eef1f8, #dfe4ee);
  border-bottom: 1px solid #8d9299;
`;
const TableArea = styled.div`
  display: flex;
  padding: 2px 3px 0 3px;
  background: #f0f0f0;
  height: 117px;
  flex: none;
  font-family: ${TABLE};
  font-size: 12px;
  letter-spacing: -0.7px;
  color: #1a1a1a;
`;
const Sheet2 = styled.div`
  flex: 1;
  height: 96px;
  display: grid;
  grid-template-columns: 45px 83px 72px 90px 78px 78px 78px 1fr;
  grid-template-rows: 14px 17px 16px 16px 16px 16px;
  border-left: 1px solid #888;
  border-top: 1px solid #888;
`;
const Letter = styled.div`
  display: flex;
  align-items: center;
  justify-content: center;
  letter-spacing: -0.35px;
  background: ${({ $on }) => ($on ? "#3399ff" : "linear-gradient(#eaeaea, #dcdcdc)")};
  color: ${({ $on }) => ($on ? "#123a6a" : "#222")};
  border-right: 1px solid #8a8a8a;
  border-bottom: 1px solid #8a8a8a;
  border-left: 1px solid #fff;
`;
const HeadCell = styled.div`
  grid-column: ${({ $col }) => $col};
  grid-row: ${({ $row }) => $row};
  display: flex;
  align-items: ${({ $bottom }) => ($bottom ? "flex-end" : "center")};
  justify-content: center;
  text-align: center;
  line-height: 16px;
  padding-bottom: ${({ $bottom }) => ($bottom ? "1px" : "0")};
  background: #f0f0f0;
  border-right: 1px solid #a8a8a8;
  border-bottom: 1px solid #8a8a8a;
`;
const CornerCell = styled(HeadCell)`
  background: #e6e6e6;
  line-height: 13px;
  padding-top: 10px;
`;
const RowHead = styled(Letter)`
  background: ${({ $on }) => ($on ? "#3399ff" : "linear-gradient(#ececec, #dadada)")};
  color: ${({ $on }) => ($on ? "#fff" : "#222")};
  border-bottom: 1px solid #777;
`;
const Cell = styled.div`
  display: flex;
  align-items: center;
  background: #fff;
  padding: 0 4px;
  letter-spacing: ${({ $a }) => ($a ? "-0.35px" : "-0.55px")};
  border-right: 1px solid #a8a8a8;
  border-bottom: 1px solid #a8a8a8;
  justify-content: ${({ $a }) => ($a === "r" ? "flex-end" : $a === "c" ? "center" : "flex-start")};
  ${({ $focus }) => $focus && "outline: 1px dotted #111; outline-offset: -1px;"}
`;
const HotFirst = styled.span`
  &::first-letter { text-decoration: underline; }
  display: inline-block;
`;
const TabRow = styled.div`
  height: 17px;
  flex: none;
  display: flex;
  padding-left: 3px;
  background: #f0f0f0;
  border-top: 1px solid #7e7e7e;
  border-bottom: 1px solid #8d8d8d;
  font-family: ${TABLE};
  font-size: 12px;
  letter-spacing: -0.72px;
`;
const SheetTab = styled.div`
  flex: none;
  width: ${({ $w }) => $w}px;
  height: ${({ $on }) => ($on ? "17px" : "16px")};
  margin-top: -1px;
  text-align: center;
  line-height: 16px;
  white-space: nowrap;
  border-right: 1px solid #7e7e7e;
  border-bottom-right-radius: 3px;
  background: ${({ $on }) => ($on ? "#fff" : "#f0f0f0")};
  position: relative;
  z-index: ${({ $on }) => ($on ? 1 : 0)};
`;
const TabNav = styled.div`
  margin-left: auto;
  display: flex;
  margin-right: 3px;
  height: 15px;
  gap: 1px;
`;
const TabNavBtn = styled.div`
  width: 14px;
  background: #e6e6e6;
  display: flex;
  align-items: center;
  justify-content: center;
  font-size: 9px;
  letter-spacing: 0;
  color: ${({ $off }) => ($off ? "#a8a8a8" : "#111")};
  border: 1px solid #c6c6c6;
`;
const BlankStrip = styled.div`
  height: 20px;
  flex: none;
  background: #f0eeee;
`;
const StatusBar = styled.div`
  height: 20px;
  flex: none;
  display: flex;
  align-items: center;
  padding-left: 3px;
  font-family: ${TABLE};
  font-size: 12px;
  letter-spacing: -0.57px;
  color: #2a2f37;
  background: linear-gradient(#a8aeb9, #cdd1d8 40%, #c8ccd4 70%, #b4b9c3);
`;
const StatusText = styled.div`
  width: 733px;
  flex: none;
`;
const StatusPane = styled.div`
  width: ${({ $w }) => $w}px;
  flex: none;
  height: 18px;
  text-align: center;
  line-height: 16px;
  font-size: 12px;
  letter-spacing: -0.55px;
  border: 1px solid;
  border-color: ${({ $up }) => ($up ? "#eef0f4 #9aa #9aa #eef0f4" : "#3a3f47 #f4f5f7 #f4f5f7 #3a3f47")};
`;
const StatusSlot = styled.div`
  width: ${({ $w }) => $w}px;
  flex: none;
  height: 18px;
  border-right: 1px solid #9ea3ac;
`;
const SizeGrip = styled.div`
  width: 8px;
  height: 8px;
  margin: 8px 1px 0 auto;
  background: radial-gradient(circle, #7f858f 1px, transparent 1.2px) 0 0 / 3px 3px;
`;

/* ---------- dialogs ---------- */
const Dialog = styled.div`
  position: absolute;
  left: ${({ $x }) => $x}px;
  top: ${({ $y }) => $y}px;
  width: ${({ $w }) => $w}px;
  height: ${({ $h }) => $h}px;
  padding: 0 5px 5px;
  display: flex;
  flex-direction: column;
  border-radius: 5px;
  background: linear-gradient(100deg, #d6e6f5, #bdd5ec 42%, #c9ddf1 60%, #e0ecf7);
  box-shadow: 0 0 0 1px rgba(120, 150, 180, .35);
  font-size: 11.1px;
  color: #0e0e0e;
`;
const DialogTitle = styled.div`
  flex: none;
  height: ${({ $h }) => $h}px;
  display: flex;
  align-items: center;
  padding-left: 1px;
`;
const CloseX = styled.div`
  margin-left: auto;
  align-self: flex-start;
  width: 47px;
  height: 18px;
  border: 1px solid #7c2820;
  border-top: 0;
  border-radius: 0 0 4px 4px;
  display: flex;
  align-items: center;
  justify-content: center;
  background: linear-gradient(#dc8d80, #c6503c 48%, #a72c1c 55%, #cd6a50);
`;
const DialogBody = styled.div`
  position: relative;
  flex: 1;
  background: #f0f0f0;
  border: 1px solid #5e6670;
  padding: 8px 9px 0;
  display: flex;
  flex-direction: column;
`;
const GroupHead = styled.div`
  height: 16px;
  flex: none;
  padding-left: 1px;
  line-height: 15px;
  font-size: 10.6px;
  color: #1c3c66;
  background: linear-gradient(#dde7f5, #dbe5f3);
  clip-path: polygon(0 0, calc(100% - 8px) 0, 100% 8px, 100% 100%, 0 100%);
`;
const GroupBody = styled.div`
  display: flex;
  flex-direction: column;
  background: #eff3f9;
  border: 1px solid #a9b0d6;
  border-top: 0;
`;
const ListPane = styled.div`
  height: 120px;
  display: flex;
  background: #fff;
  border-top: 1px solid #8a8a8a;
  border-left: 1px solid #8a8a8a;
`;
const ListBody = styled.div`
  flex: 1;
`;
const ListSel = styled.div`
  height: 19px;
  line-height: 19px;
  padding-left: 3px;
  background: #3399ff;
  color: #e6f2ff;
`;
const CountRow = styled.div`
  height: 29px;
  display: flex;
  align-items: center;
  gap: 8px;
  padding-left: 2px;
  font-family: ${TABLE};
  font-size: 11.3px;
  letter-spacing: -0.45px;
`;
const CountBox = styled.div`
  width: 28px;
  height: 17px;
  background: #f0f0f0;
  border: 1px solid;
  border-color: #a0a0a0 #fff #fff #a0a0a0;
  text-align: right;
  padding-right: 2px;
  line-height: 15px;
  font-size: 12px;
`;
const Rule = styled.div`
  height: 2px;
  margin-top: 8px;
  flex: none;
  border-top: 1px solid #a0a0a0;
  border-bottom: 1px solid #fff;
`;
const BtnRow = styled.div`
  margin-top: ${({ $t }) => $t}px;
  display: flex;
  align-items: center;
  gap: ${({ $gap }) => $gap || 9}px;
`;
const IconBtn = styled.div`
  width: ${({ $w }) => $w || 25}px;
  height: 20px;
  flex: none;
  display: flex;
  align-items: center;
  justify-content: center;
  border: 1px solid #6f6f6f;
  border-radius: 3px;
  background: linear-gradient(#f4f4f4, #ebebeb 50%, #d6d6d6);
`;
const TextBtn = styled.div`
  width: ${({ $w }) => $w}px;
  height: 20px;
  flex: none;
  margin-left: ${({ $ml }) => $ml || 0}px;
  text-align: center;
  line-height: 18px;
  border: 1px solid ${({ $def }) => ($def ? "#3c7fb1" : "#707070")};
  border-radius: 3px;
  font-family: ${TABLE};
  font-size: 12px;
  letter-spacing: -0.4px;
  background: ${({ $def }) =>
    $def ? "linear-gradient(#eaf6fd, #d9f0fc 50%, #bee6fd)" : "linear-gradient(#f4f4f4, #ebebeb 50%, #d6d6d6)"};
`;
const ComboField = styled.div`
  height: 20px;
  margin: 4px 1px 0 4px;
  flex: none;
  border: 1px solid #2d6e90;
  border-radius: 3px;
  background: linear-gradient(#e0f2fb, #c3e5f6 50%, #86c6e8);
  display: flex;
  justify-content: flex-end;
  align-items: center;
  padding-right: 5px;
  &::after {
    content: "";
    border: 4px solid transparent;
    border-top: 4px solid #111;
    border-bottom: 0;
  }
`;
const DropList = styled.div`
  position: absolute;
  left: 12px;
  top: 49px;
  width: 232px;
  height: 29px;
  background: #fff;
  border: 1px solid #646464;
  z-index: 2;
  font-family: ${TABLE};
  font-size: 11px;
  letter-spacing: -0.2px;
`;
const DropItem = styled.div`
  height: 13.5px;
  line-height: 14px;
  padding-left: 1px;
  white-space: nowrap;
  background: ${({ $on }) => ($on ? "#3399ff" : "#fff")};
  color: ${({ $on }) => ($on ? "#e9f4ff" : "#111")};
`;

/* annotation layer: call-out arrows, click bursts, mouse pointers */
const Overlay = styled.svg`
  position: absolute;
  left: 0;
  top: 0;
  width: 1478px;
  height: 1019px;
  pointer-events: none;
  z-index: 5;
`;
const burst = (cx, cy) => {
  const out = [];
  const r = [20, 5, 15, 5, 18, 5, 21, 5, 14, 5, 18, 5, 15, 5, 20, 5, 14, 5, 17, 5];
  r.forEach((q, k) => {
    const a = (Math.PI * 2 * k) / r.length + 0.2;
    out.push(`${(cx + q * Math.cos(a)).toFixed(1)},${(cy + q * 0.85 * Math.sin(a)).toFixed(1)}`);
  });
  return out.join(" ");
};
const Cursor = ({ x, y }) => (
  <path
    transform={`translate(${x} ${y})`}
    d="M0 0v20l4.6-4 3.6 8.4 3.5-1.5-3.5-8.2 6.3-.4z"
    fill="#fff"
    stroke="#111"
    strokeWidth="1"
    style={{ filter: "drop-shadow(3px 3px 2px rgba(0,0,0,.55))" }}
  />
);
const CallOut = ({ from, to, head }) => (
  <g style={{ filter: "drop-shadow(2px 2px 1.5px rgba(0,0,0,.35))" }}>
    <line x1={from[0]} y1={from[1]} x2={to[0]} y2={to[1]} stroke="#f5bc00" strokeWidth="3" />
    <polygon points={head} fill="#f5bc00" />
  </g>
);

const MENU = [
  ["", "A", "rchivo", 53], ["", "E", "dición", 53], ["", "V", "er", 32], ["", "I", "nsertar", 54], ["", "C", "álculo", 53],
  ["", "R", "esultados", 72], ["", "H", "erramientas", 83], ["", "T", "abla", 42], ["", "O", "pciones", 64],
  ["", "M", "ódulos adicionales", 122], ["Ve", "n", "tana", 58], ["A", "y", "uda", 50]
];
const SHEET_TABS = [
  ["Nudos", 37], ["Líneas", 44], ["Materiales", 59], ["Superficies", 60], ["Sólidos", 46], ["Huecos", 46], ["Apoyos en nudos", 92],
  ["Apoyos en línea", 88], ["Apoyos en superficie", 108], ["Articulaciones lineales", 114], ["Secciones", 60],
  ["Articulaciones en barras", 122], ["Excentricidades de barras", 133], ["Divisiones de barras", 105], ["Barras", 40],
  ["Apoyos elásticos en barra", 130]
];
const TABLE_ROWS = [["1", "0.000", "0.000"], ["2", "3.333", "0.000"], ["3", "6.667", "0.000"]];
const CloseMark = () => (
  <svg width="12" height="10" viewBox="0 0 12 10"><path d="M2 1l8 8M10 1L2 9" stroke="#fff" strokeWidth="2.6" /></svg>
);

const App = () => (
  <Desk>
    <Global />
    <TitleBar>
      <svg width="17" height="17" viewBox="0 0 18 18">
        <path d="M5 8l4-6 8 1-2 8-6 1z" fill="#7e93b8" stroke="#39465c" strokeWidth=".7" />
        <path d="M9 2l3 4 5-3M12 6l-1 6" stroke="#d6e0ee" strokeWidth=".8" fill="none" />
        <path d="M2 7h7v2H4.5v2H7q2.5 0 2.5 2.5T7 16H2v-2h4.5q1 0 1-.7t-1-.8H2z" fill="#d8a92c" stroke="#5c4610" strokeWidth=".5" />
      </svg>
      <TitleText>RFEM 5.03.0050 (64bit) - [Enrejado]</TitleText>
      <WinButtons>
        <WinBtn $w={28}>
          <svg width="12" height="8"><rect x="1" y="4" width="10" height="3" fill="#f4f8fc" stroke="#445" strokeWidth=".6" /></svg>
        </WinBtn>
        <WinBtn $w={27}>
          <svg width="12" height="10"><rect x="1" y="1" width="9" height="8" fill="none" stroke="#f4f8fc" strokeWidth="1.6" /></svg>
        </WinBtn>
        <WinBtn $w={47} $close><CloseMark /></WinBtn>
      </WinButtons>
    </TitleBar>
    <Frame>
      <MenuBar>
        <Logo viewBox="0 0 17 13">
          <rect width="17" height="13" fill="#16276b" />
          <path d="M0 8h17M3 8l5-5 5 5M8 3v10" stroke="#fff" strokeWidth="1" fill="none" />
        </Logo>
        {MENU.map(([a, b, c, w]) => (
          <MenuItem key={c} $w={w}>{a}<u>{b}</u>{c}</MenuItem>
        ))}
        <MdiButtons>
          <svg width="10" height="8"><rect x="1" y="6" width="8" height="2" fill="#7e8794" /></svg>
          <svg width="11" height="9"><rect x="1" y="2" width="8" height="6" fill="none" stroke="#7e8794" /><rect x="3" y="0" width="8" height="3" fill="#7e8794" /></svg>
          <svg width="11" height="10"><path d="M1 1l9 8M10 1L1 9" stroke="#7e8794" strokeWidth="2" /></svg>
        </MdiButtons>
      </MenuBar>
      <ToolRow>{ROW1.map((g, i) => <ToolGroup key={i}>{tools(g)}</ToolGroup>)}</ToolRow>
      <ToolRow>{ROW2.map((g, i) => <ToolGroup key={i} $gap={4}>{tools(g)}</ToolGroup>)}</ToolRow>
      <Main>
        <NavPanel>
          <PaneHead>
            Navegador de proyectos - Datos
            <PaneBtns>
              <svg width="9" height="11"><path d="M2 1h5M3 1v5h3V1M1 6h7M4.5 6v5" stroke="#5a6472" fill="none" /></svg>
              <svg width="9" height="9"><path d="M1 1l7 7M8 1L1 8" stroke="#5a6472" strokeWidth="1.3" /></svg>
            </PaneBtns>
          </PaneHead>
          <NavBody>
            <TreeRow0>
              <Tree>
                {TREE.map(([level, label, exp, icon, last], k) => (
                  <TreeLine key={k} level={level} label={label} exp={exp} icon={icon} last={last} />
                ))}
              </Tree>
              <VBar>
                <Arrow $v $d="up" />
                <Thumb $v $size={160} />
                <BarSpace />
                <Arrow $v $d="down" />
              </VBar>
            </TreeRow0>
            <HBar>
              <Arrow $d="left" />
              <Thumb $size={169}>III</Thumb>
              <BarSpace />
              <Arrow $d="right" />
            </HBar>
          </NavBody>
          <NavTabs>
            <NavTab $on>
              <SvgIcon viewBox="0 0 18 18" $s={16}>
                <rect x="1" y="2" width="14" height="12" fill="#f2e08a" stroke="#a08a2c" />
                <rect x="1" y="2" width="14" height="3" fill="#3a5ea8" />
                <circle cx="10" cy="10" r="3.5" fill="#eaf2fb" stroke="#444" />
                <path d="M13 13l4 4" stroke="#444" strokeWidth="2" />
              </SvgIcon>
              Datos
            </NavTab>
            <NavTab>
              <SvgIcon viewBox="0 0 18 18" $s={16}>{ICONS.doc2}</SvgIcon>
              Mostrar
            </NavTab>
            <NavTab>
              <SvgIcon viewBox="0 0 18 18" $s={16}>
                <path d="M11 1l4 7-3 2-4-7zM2 16h13M5 13q8 2 9-5" fill="none" stroke="#3c5aa0" strokeWidth="1.6" />
              </SvgIcon>
              Vistas
            </NavTab>
          </NavTabs>
        </NavPanel>
        <Viewport><Scene /></Viewport>
      </Main>
      <LowerPanel>
        <LowerHead>
          1.1 Nudos
          <PaneBtns>
            <svg width="9" height="11"><path d="M2 1h5M3 1v5h3V1M1 6h7M4.5 6v5" stroke="#5a6472" fill="none" /></svg>
            <svg width="9" height="9"><path d="M1 1l7 7M8 1L1 8" stroke="#5a6472" strokeWidth="1.3" /></svg>
          </PaneBtns>
        </LowerHead>
        <LowerTools>
          {tools("*tri tplus ~tdown ~tred sep:8 impL impR sep:9 *hookL:21 *hookR:21 ~sync sep:8 ~b1 ~b2 ~b3 sep:8 ~xBox sep:10 xr xl:20 xr2 sep:8 colY colB sep:8 edit:26 sep:4 doc2 glasses excel calc sep:6 abf:25 fx:20 fxx:24 sep:6 lock")}
        </LowerTools>
        <TableArea>
          <Sheet2>
            <CornerCell $col="1" $row="1 / 4">Nudo<br />núm.</CornerCell>
            <Letter $on>A</Letter>
            <Letter>B</Letter>
            <Letter>C</Letter>
            <Letter>D</Letter>
            <Letter>E</Letter>
            <Letter>F</Letter>
            <Letter>G</Letter>
            <HeadCell $col="2" $row="2 / 4" $bottom>Tipo de nudo</HeadCell>
            <HeadCell $col="3" $row="2 / 4">Nudo de<br />referencia</HeadCell>
            <HeadCell $col="4" $row="2 / 4">Sistema de<br />coordenadas</HeadCell>
            <HeadCell $col="5 / 8" $row="2">Coordenadas del nudo</HeadCell>
            <HeadCell $col="5" $row="3">X [m]</HeadCell>
            <HeadCell $col="6" $row="3">Y [m]</HeadCell>
            <HeadCell $col="7" $row="3">Z [m]</HeadCell>
            <HeadCell $col="8" $row="2 / 4" $bottom>Comentario</HeadCell>
            {TABLE_ROWS.map(([n, x, rest], r) => (
              <React.Fragment key={n}>
                <RowHead $on={r === 0}>{n}</RowHead>
                <Cell $focus={r === 0}>Estándar</Cell>
                <Cell $a="c">0</Cell>
                <Cell><HotFirst>Cartesiano</HotFirst></Cell>
                <Cell $a="r">{x}</Cell>
                <Cell $a="r">{rest}</Cell>
                <Cell $a="r">0.000</Cell>
                <Cell />
              </React.Fragment>
            ))}
          </Sheet2>
          <VBar $w={16}>
            <Arrow $v $d="up" />
            <Thumb $v $size={15} />
            <BarSpace $h={47} />
            <Arrow $v $d="down" />
          </VBar>
        </TableArea>
        <TabRow>
          {SHEET_TABS.map(([t, w], k) => <SheetTab key={t} $w={w} $on={k === 0}>{t}</SheetTab>)}
          <TabNav>
            <TabNavBtn $off>|◂</TabNavBtn>
            <TabNavBtn $off>◂</TabNavBtn>
            <TabNavBtn>▸</TabNavBtn>
            <TabNavBtn>▸|</TabNavBtn>
          </TabNav>
        </TabRow>
        <BlankStrip />
        <StatusBar>
          <StatusText>Elemento núm. 7 de tipo "Polilínea" con barra núm. 7</StatusText>
          <StatusPane $w={42}>FORZC</StatusPane>
          <StatusPane $w={49} $up>REJILLA</StatusPane>
          <StatusPane $w={51}>CARTES</StatusPane>
          <StatusPane $w={48}>REFENT</StatusPane>
          <StatusPane $w={31}>GLN</StatusPane>
          <StatusPane $w={29}>DXF</StatusPane>
          <StatusSlot $w={153} />
          <StatusSlot $w={88} />
          <StatusSlot $w={74} />
          <StatusSlot $w={74} />
          <SizeGrip />
        </StatusBar>
      </LowerPanel>
    </Frame>

    <Dialog $x={278} $y={158} $w={417} $h={257}>
      <DialogTitle $h={27}>
        Barras rectas superpuestas
        <CloseX><CloseMark /></CloseX>
      </DialogTitle>
      <DialogBody>
        <GroupHead>Grupos de barras superpuestas</GroupHead>
        <GroupBody>
          <ListPane>
            <ListBody><ListSel>7,35</ListSel></ListBody>
            <VBar $w={18}>
              <Arrow $v $d="up" />
              <Thumb $v $size={82}>≡</Thumb>
              <BarSpace />
              <Arrow $v $d="down" />
            </VBar>
          </ListPane>
          <CountRow>
            Número de grupos:
            <CountBox>1</CountBox>
          </CountRow>
        </GroupBody>
        <Rule />
        <BtnRow $t={11}>
          <IconBtn><Icon n="help" /></IconBtn>
          <IconBtn><Icon n="eyeBtn" /></IconBtn>
          <IconBtn><Icon n="xlsWarn" /></IconBtn>
          <IconBtn><Icon n="penWarn" /></IconBtn>
          <TextBtn $w={73} $ml={178} $def>Aceptar</TextBtn>
        </BtnRow>
      </DialogBody>
    </Dialog>

    <Dialog $x={1123} $y={554} $w={266} $h={137}>
      <DialogTitle $h={28}>
        Seleccionar Barra
        <CloseX><CloseMark /></CloseX>
      </DialogTitle>
      <DialogBody>
        <GroupHead>Núm.</GroupHead>
        <ComboField />
        <DropList>
          <DropItem $on>7: 7; Viga; 2: IPE 180; L: 3.333 m</DropItem>
          <DropItem>35: 37; Viga; 2: IPE 180; L: 1.667 m</DropItem>
        </DropList>
        <BtnRow $t={27} $gap={11}>
          <IconBtn $w={25}><Icon n="help" /></IconBtn>
          <TextBtn $w={72} $ml={47} $def>Aceptar</TextBtn>
          <TextBtn $w={72}>Cancelar</TextBtn>
        </BtnRow>
      </DialogBody>
    </Dialog>

    <Overlay viewBox="0 0 1478 1019">
      <CallOut from={[672, 420]} to={[718, 467]} head="727,474 709,467 721,456" />
      <CallOut from={[815, 500]} to={[1098, 578]} head="1113,583 1096,588 1101,572" />
      <polygon points={burst(775, 472)} fill="#e8b010" />
      <polygon points={burst(648, 393)} fill="#e8b010" />
      <Cursor x={775} y={472} />
      <Cursor x={646} y={392} />
      <Cursor x={1319} y={624} />
    </Overlay>
  </Desk>
);

export default App;
